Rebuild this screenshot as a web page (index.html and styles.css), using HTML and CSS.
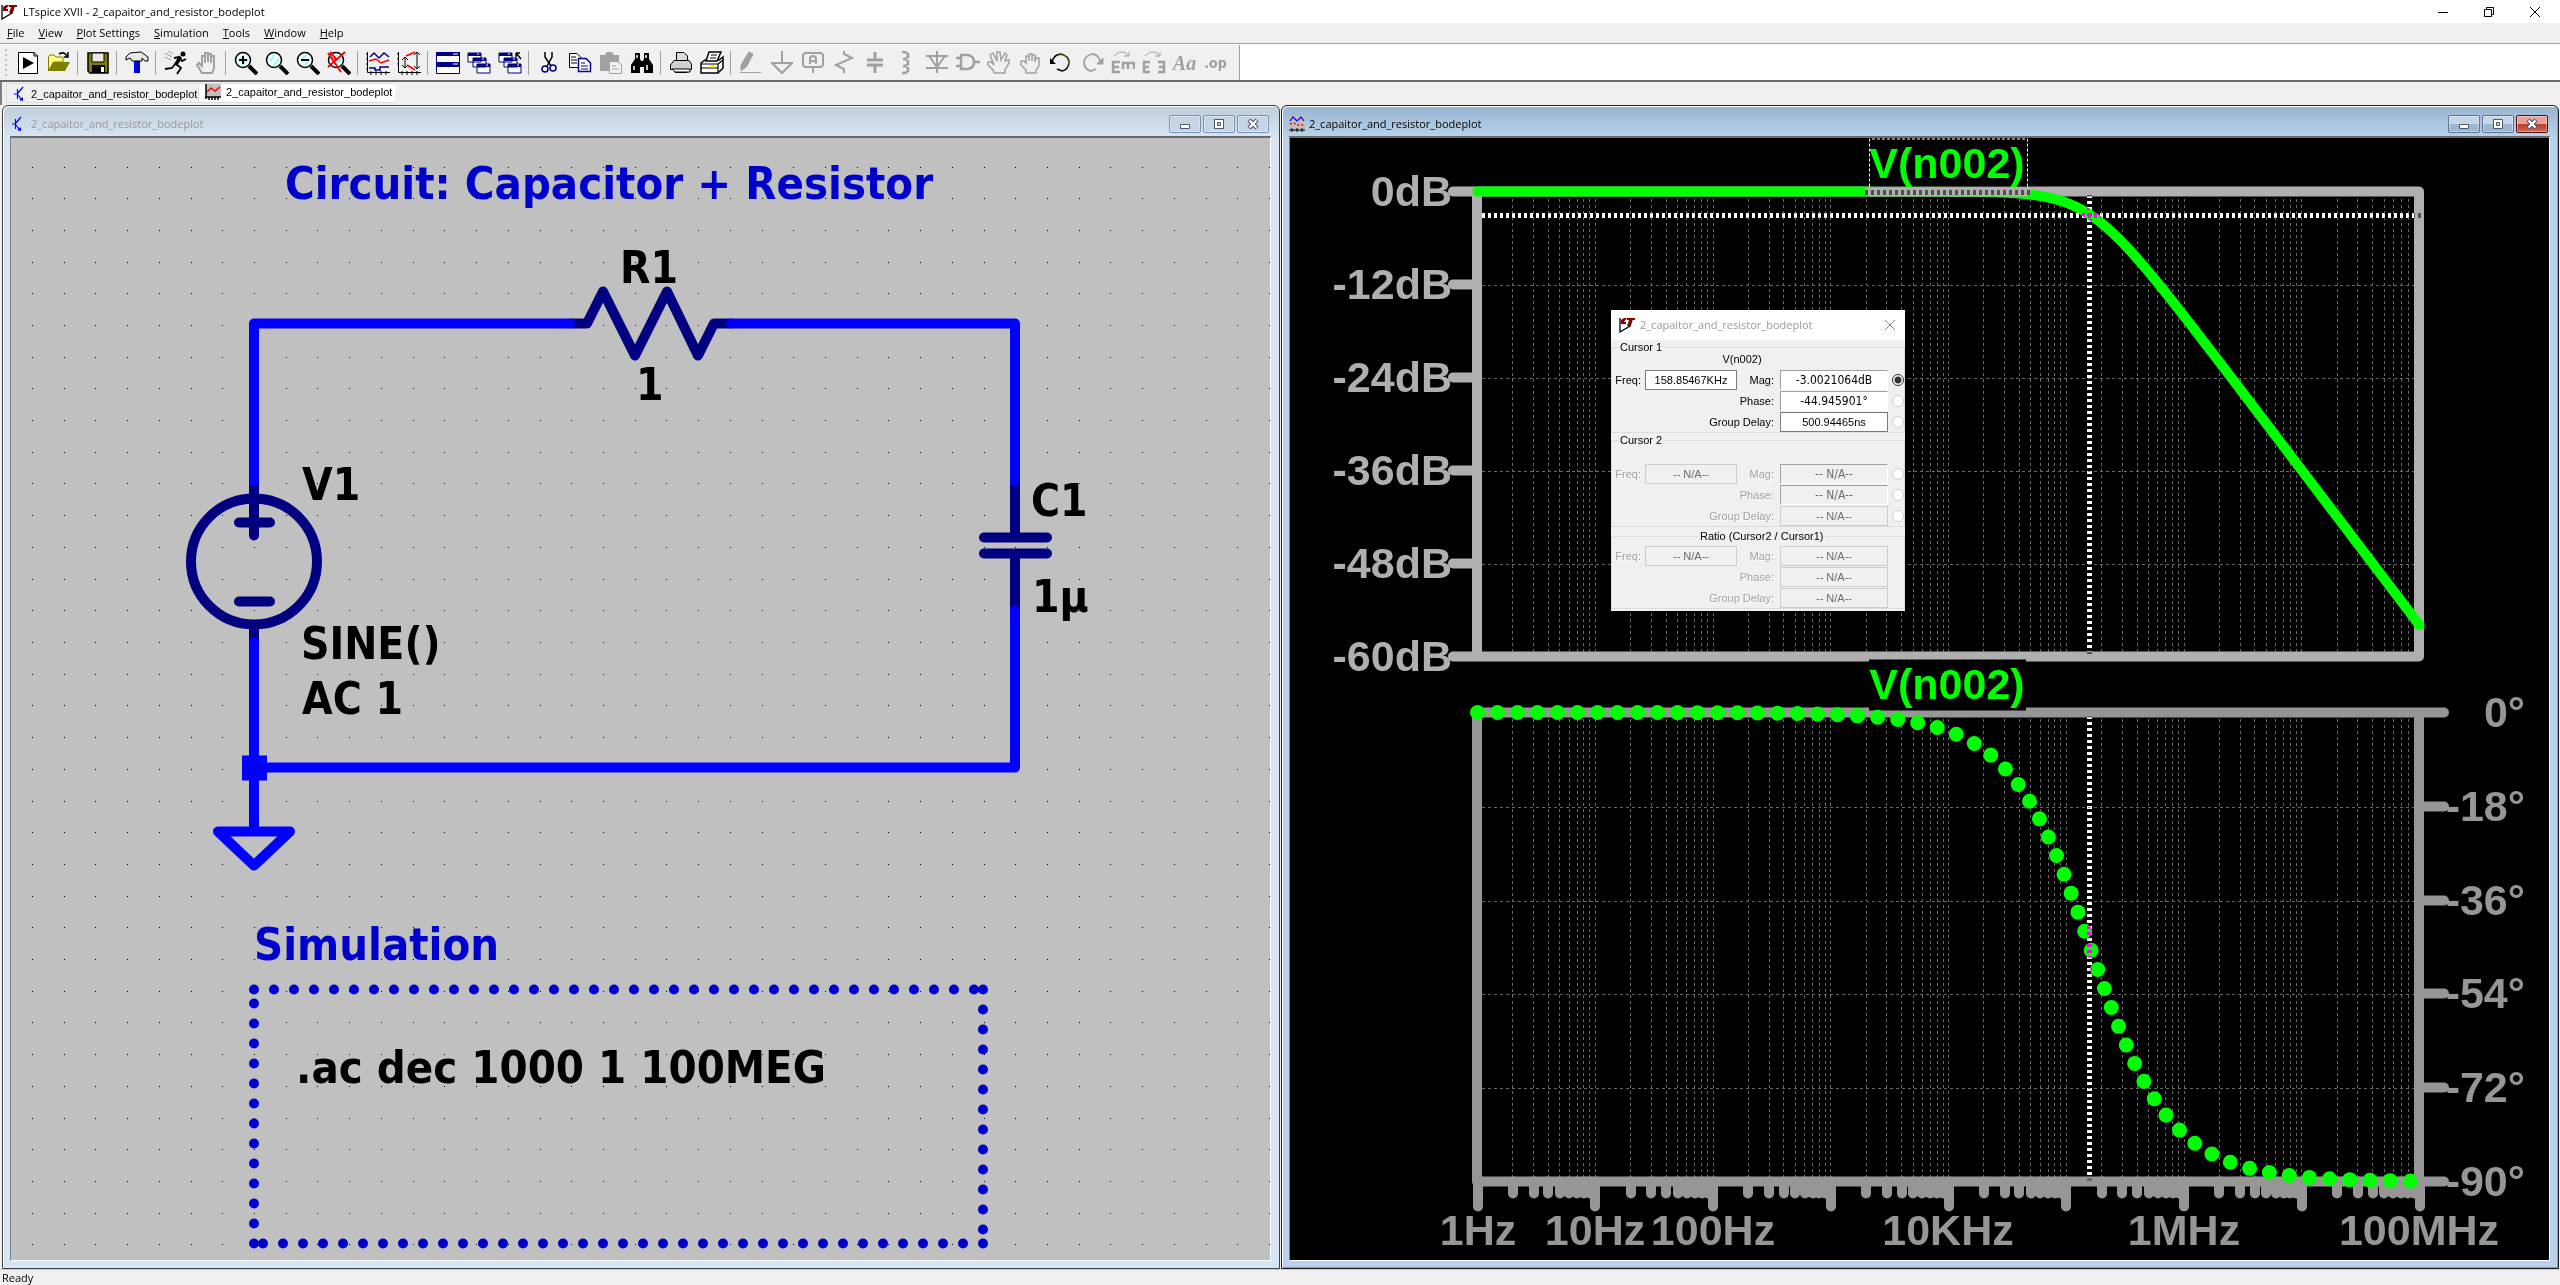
FILE: index.html
```
<!DOCTYPE html>
<html lang="en">
<head>
<meta charset="utf-8">
<title>LTspice XVII - 2_capaitor_and_resistor_bodeplot</title>
<link rel="stylesheet" href="styles.css">
</head>
<body>
<svg class="defs" aria-hidden="true">
  <symbol id="logo" viewBox="0 0 16 16"><path d="M1 1L1 15L11 9L13 3" fill="#fff" stroke="#000" stroke-width="1.3"/><path d="M5 1L2 3V7H7V5H5L8 1ZM8 1H16V3H13L11 9H8L10 3H8Z" fill="#8b0000"/></symbol>
  <symbol id="npn" viewBox="0 0 16 16"><path d="M2 8H5M5.500 3V13M6 7L11 1M6 9L10 14" fill="none" stroke="#00f" stroke-width="1.200"/><path d="M11 15V11L7 14Z" fill="#00f"/></symbol>
  <symbol id="wave" viewBox="0 0 16 16"><path d="M1 0H16V13H1Z" fill="#c0c0c0"/><path d="M1 0V15M0 13H16M4 13V16M7 13V16M10 13V16M13 13V16" fill="none" stroke="#000" stroke-width="1.500"/><path d="M2 8L6 4L10 7L15 3" fill="none" stroke="red" stroke-width="1.500"/></symbol>
  <symbol id="waves" viewBox="0 0 16 16"><path d="M0 0H16V16H0Z" fill="#c0c0c0"/><path d="M1 5L4 1L8 5L12 1L15 5" fill="none" stroke="#00f" stroke-width="1.2"/><path d="M1 8L5 7L8 9L15 9" fill="none" stroke="red" stroke-width="1.5" stroke-dasharray="2 2"/><path d="M0 14H16M3 12V16M8 12V16M13 12V16" stroke="#000"/></symbol>
  <symbol id="m-min" viewBox="0 0 12 12"><path d="M1.5 6.500H10.500V10.500H1.500Z" fill="#fff" stroke="#50586c"/></symbol>
  <symbol id="m-max" viewBox="0 0 12 12"><path d="M1.500 1.500H10.500V10.500H1.500Z" fill="#fff" stroke="#50586c"/><path d="M4.500 4.500H7.500V7.500H4.500Z" fill="#b8c8dc" stroke="#50586c"/></symbol>
  <symbol id="m-x" viewBox="0 0 12 12"><path d="M2 2L10 10M10 2L2 10" stroke="#50586c" stroke-width="4.500"/><path d="M2.500 2.500L9.500 9.500M9.500 2.500L2.500 9.500" stroke="#fff" stroke-width="2.200"/></symbol>
  <symbol id="lens" viewBox="0 0 24 24"><path d="M15 15L23 23" stroke="#000" stroke-width="4"/><circle cx="9" cy="9" r="7.500" fill="#f4ffff" stroke="#000" stroke-width="1.500"/><path d="M5 10L10 4M9 14L14 8" stroke="#6ff" stroke-width="1.200"/></symbol>
  <symbol id="casc" viewBox="0 0 24 24"><path d="M1 2H14V11H1ZM6 7H19V16H6ZM10 13H23V22H10Z" fill="#fff" stroke="navy"/><path d="M1 2H14V5H1ZM6 7H19V10H6ZM10 13H23V16H10Z" fill="navy"/><path d="M10 3H12M15 8H17M19 14H21" stroke="#fff"/></symbol>
</svg>

<header class="titlebar">
  <svg class="ico16"><use href="#logo"/></svg>
  <h1 class="caption">LTspice XVII - 2_capaitor_and_resistor_bodeplot</h1>
  <button class="sys" aria-label="Minimize"><svg viewBox="0 0 12 12"><path d="M1 6.500H11" stroke="#000"/></svg></button>
  <button class="sys" aria-label="Restore"><svg viewBox="0 0 12 12"><path d="M1.500 3.500H8.500V10.500H1.500ZM3.500 3V1.500H10.500V8.500H9" fill="none" stroke="#000"/></svg></button>
  <button class="sys" aria-label="Close"><svg viewBox="0 0 12 12"><path d="M1 1L11 11M11 1L1 11" stroke="#000"/></svg></button>
</header>

<nav class="menubar">
  <button><u>F</u>ile</button><button><u>V</u>iew</button><button><u>P</u>lot Settings</button><button><u>S</u>imulation</button><button><u>T</u>ools</button><button><u>W</u>indow</button><button><u>H</u>elp</button>
</nav>

<div class="toolrow">
<div class="toolbar" role="toolbar">
  <span class="grip"></span>
  <button aria-label="New"><svg viewBox="0 0 24 24"><path d="M2.500 1.500H18L21.500 5V22.500H2.500Z" fill="#fff" stroke="#000"/><path d="M18 1V5H22" fill="none" stroke="#000"/><path d="M7 6V18L18 12Z"/></svg></button>
  <button aria-label="Open"><svg viewBox="0 0 24 24"><path d="M1.500 20V6L3 4H7L9 6H16V11H7Z" fill="#ffff80" stroke="#808000"/><path d="M1 20L6 11H23L18 20Z" fill="#808000"/><path d="M12 3Q17 0 20 5M17 6H21V1" fill="none" stroke="#000" stroke-width="1.500"/></svg></button>
  <span class="sep"></span>
  <button aria-label="Save"><svg viewBox="0 0 24 24"><path d="M2 2H22V22H4L2 20Z" fill="#808000" stroke="#000" stroke-width="1.500"/><path d="M6 2H18V11H6Z" fill="#e8e8e8" stroke="#000"/><path d="M6 14H19V22H6Z"/><path d="M15 16H18V21H15Z" fill="#fff"/></svg></button>
  <span class="sep"></span>
  <button aria-label="Control panel"><svg viewBox="0 0 24 24"><path d="M9 10H15V22H9Z" fill="#00f"/><path d="M12 10H15V22H12Z" fill="#0000a0"/><path d="M1 6L5 2L16 1L23 6V10H20L17 7V10H7L5 7L1 9Z" fill="#e8e8e8" stroke="#000"/></svg></button>
  <span class="sep"></span>
  <button aria-label="Run"><svg viewBox="0 0 24 24"><circle cx="19" cy="3" r="2.500"/><path d="M16 5L12 13L17 17L13 23M12 12L8 17L1 18M10 7L15 6L18 10L22 8" fill="none" stroke="#000" stroke-width="1.800"/><path d="M15 5L10 13L13 15L18 7Z"/><path d="M1 2L8 6M1 6L7 9M4 0L9 3" stroke="#999"/></svg></button>
  <button aria-label="Halt"><svg viewBox="0 0 24 24" class="dim"><path d="M7 22L2 14L4 12L7 15V5H10V12V2H13V11V3H16V12V5H19V17L17 22Z" stroke-width="2"/></svg></button>
  <span class="sep"></span>
  <button aria-label="Zoom in"><svg viewBox="0 0 24 24"><use href="#lens"/><path d="M5 9H13M9 5V13" stroke="#000" stroke-width="2"/></svg></button>
  <button aria-label="Pan"><svg viewBox="0 0 24 24"><use href="#lens"/></svg></button>
  <button aria-label="Zoom out"><svg viewBox="0 0 24 24"><use href="#lens"/><path d="M5 9H13" stroke="#000" stroke-width="2"/></svg></button>
  <button aria-label="Zoom full"><svg viewBox="0 0 24 24"><use href="#lens"/><path d="M1 2L14 21M18 1L1 16M3 1L9 8" stroke="red" stroke-width="2"/></svg></button>
  <span class="sep"></span>
  <button aria-label="Autorange"><svg viewBox="0 0 24 24"><path d="M1.500 1V21.500H24M0 3H2M0 8H2M0 13H2M0 18H2M5 20V24M10 20V24M15 20V24M20 20V24" fill="none" stroke="#000"/><path d="M4 6L8 2L13 7L18 2L23 6M3 17H9V19H14V16H23" fill="none" stroke="navy" stroke-width="1.500"/><path d="M3 10L10 8L15 12L23 9" fill="none" stroke="red" stroke-width="1.500"/></svg></button>
  <button aria-label="Pick visible traces"><svg viewBox="0 0 24 24"><path d="M1.500 1V21.500H24M0 3H2M0 8H2M0 13H2M5 20V24M10 20V24M15 20V24M20 20V24M8 6V17M5 9L8 6L11 9M5 14L8 17L11 14M20 1V18M17 4L20 1L23 4M17 15L20 18L23 15" fill="none" stroke="#000"/><path d="M18 1L9 5M10 14L18 19" stroke="red" stroke-width="1.500"/></svg></button>
  <span class="sep"></span>
  <button aria-label="Tile windows"><svg viewBox="0 0 24 24"><path d="M.5 1.500H23.500V22.500H.5Z" fill="#fff" stroke="navy"/><path d="M0 1H24V5H0ZM0 11H24V16H0Z" fill="navy"/><path d="M17 3H22M17 13H22" stroke="#fff"/></svg></button>
  <button aria-label="Cascade windows"><svg viewBox="0 0 24 24"><use href="#casc"/></svg></button>
  <button aria-label="Close all windows"><svg viewBox="0 0 24 24"><use href="#casc"/><path d="M18 2H22M18 2V6M18 2L23 8" stroke="#000" stroke-width="1.500"/></svg></button>
  <span class="sep"></span>
  <button aria-label="Cut"><svg viewBox="0 0 24 24"><path d="M8 1V6L14 15M15 1V6L10 15" fill="none" stroke="#000" stroke-width="1.500"/><circle cx="8" cy="18" r="3" fill="none" stroke="navy" stroke-width="1.500"/><circle cx="16" cy="17" r="3" fill="none" stroke="navy" stroke-width="1.500"/></svg></button>
  <button aria-label="Copy"><svg viewBox="0 0 24 24"><path d="M1.500 2.500H9L13.500 7V16.500H1.500Z" fill="#fff" stroke="#000"/><path d="M3 6H8M3 9H9M3 12H9" stroke="#000"/><path d="M10.500 7.500H18L22.500 12V20.500H10.500Z" fill="#fff" stroke="navy" stroke-width="1.500"/><path d="M13 12H17M13 15H20M13 18H20" stroke="navy"/></svg></button>
  <button aria-label="Paste"><svg viewBox="0 0 24 24"><path d="M1 4H6L8 1H13L15 4H20V20H1Z" fill="#a0a0a0"/><path d="M10.500 10.500H19L22.500 14V22.500H10.500Z" fill="#f0f0f0" stroke="#a0a0a0"/><path d="M13 15H17M13 18H20" stroke="#a0a0a0"/></svg></button>
  <button aria-label="Find"><svg viewBox="0 0 24 24"><path d="M5 2H10V8L11 10H13L14 8V2H19V8L23 14V22H14V16H10V22H1V14L5 8Z"/><path d="M4 15V19M7 4V7M16 4V7M17 14V19" stroke="#fff" stroke-width="1.500"/></svg></button>
  <span class="sep"></span>
  <button aria-label="Print"><svg viewBox="0 0 24 24"><path d="M7.500 9V1.500H15L18.500 5V10" fill="#ddd" stroke="#000"/><path d="M1.500 18.500V14L5 9.500H20L22.500 13V18.500H18V21.500H6V18.500Z" fill="#d0d0d0" stroke="#000"/><path d="M3 18H21V21H6Z" fill="#fff" stroke="#000"/></svg></button>
  <button aria-label="Print setup"><svg viewBox="0 0 24 24"><path d="M1 12L5 9H19L23 6V17L18 22H1Z" fill="#fff" stroke="#000" stroke-width="1.500"/><path d="M6 10L9 1H21L17 10Z" fill="#fff" stroke="#000" stroke-width="1.500"/><path d="M11 4H17M10 7H16M1 13H18V22M1 17H18M18 13L23 9" fill="none" stroke="#000" stroke-width="1.200"/><path d="M10 15.500H15" stroke="#ee0" stroke-width="2"/></svg></button>
  <span class="sep"></span>
  <button aria-label="Wire"><svg viewBox="0 0 24 24" class="dim"><path d="M1 21.500H22"/><path d="M10 1L14 3L8 15L2 20V14Z" class="solid"/></svg></button>
  <button aria-label="Ground"><svg viewBox="0 0 24 24" class="dim"><path d="M12 0V12M1 12H23M2 12L12 22L22 12" stroke-width="2"/></svg></button>
  <button aria-label="Net label"><svg viewBox="0 0 24 24" class="dim"><path d="M4 2H20L22 4V14L20 16H4L2 14V4ZM12 16V22M9 13V7L11 5H13L15 7V13M9 10H15" stroke-width="2"/></svg></button>
  <button aria-label="Resistor"><svg viewBox="0 0 24 24" class="dim"><path d="M12 0V3L20 7L4 14L12 18V22" stroke-width="2"/></svg></button>
  <button aria-label="Capacitor"><svg viewBox="0 0 24 24" class="dim"><path d="M12 1V9M4 9H20M4 14H20M12 14V22" stroke-width="3"/></svg></button>
  <button aria-label="Inductor"><svg viewBox="0 0 24 24" class="dim"><path d="M8 1H11L14 3V6L11 8H9H11L14 10V13L11 15H9H11L14 17V20L11 22H8" stroke-width="2.500"/></svg></button>
  <button aria-label="Diode"><svg viewBox="0 0 24 24" class="dim"><path d="M12 0V22M1 5H23M4 5L12 16L20 5M1 17H23" stroke-width="2"/></svg></button>
  <button aria-label="Component"><svg viewBox="0 0 24 24" class="dim"><path d="M0 7H5M0 15H5M5 4H12Q18 5 18 11Q18 17 12 18H5ZM18 11H24" stroke-width="2.500"/></svg></button>
  <button aria-label="Move"><svg viewBox="0 0 24 24" class="dim"><path d="M7 22L6 19L1 14V11L4 11L7 14L3 4L6 2L10 10V1H13L14 9L18 2L20 4L18 10L22 9V12L18 19V22Z" stroke-width="1.500"/></svg></button>
  <button aria-label="Drag"><svg viewBox="0 0 24 24" class="dim"><path d="M8 22V19L3 14V10L6 10L8 12V5H11V10V3H14V10V4H17V11L18 7H21V15L18 19V22Z" stroke-width="1.500"/></svg></button>
  <button aria-label="Undo"><svg viewBox="0 0 24 24"><path d="M3 10Q6 3 12 3Q20 5 20 12Q19 19 13 20L8 18" fill="none" stroke="#000" stroke-width="1.500"/><path d="M9 4Q19 2 20 13" fill="none" stroke="#808000"/><path d="M1 7V13H7Z"/></svg></button>
  <button aria-label="Redo"><svg viewBox="0 0 24 24" class="dim"><path d="M20 10Q18 3 12 3Q4 5 4 12Q5 19 11 20L16 18" stroke-width="1.800"/><path d="M23 7V13H17Z" class="solid"/></svg></button>
  <button aria-label="Rotate"><svg viewBox="0 0 24 24" class="dim"><path d="M3 5Q8 -1 15 2L17 5M13 5H18V1"/><path d="M9 11H2V21H9M2 16H8M12 18V12H23V18M17 12V18" stroke-width="2.500"/></svg></button>
  <button aria-label="Mirror"><svg viewBox="0 0 24 24" class="dim"><path d="M3 5Q8 -1 15 2L17 5M13 5H18V1"/><path d="M8 11H2V21H8M2 16H7M16 11H22V21H16M22 16H17" stroke-width="2.500"/></svg></button>
  <button aria-label="Text" class="glyph script">Aa</button>
  <button aria-label="SPICE directive" class="glyph">.op</button>
</div>
</div>

<div class="tabs">
  <button class="tab"><svg class="ico16"><use href="#npn"/></svg>2_capaitor_and_resistor_bodeplot</button>
  <button class="tab current"><svg class="ico16"><use href="#wave"/></svg>2_capaitor_and_resistor_bodeplot</button>
</div>

<main class="workspace">
  <section class="win">
    <header class="wincap">
      <svg class="ico16"><use href="#npn"/></svg><h2 class="caption">2_capaitor_and_resistor_bodeplot</h2>
      <button aria-label="Minimize"><svg><use href="#m-min"/></svg></button><button aria-label="Maximize"><svg><use href="#m-max"/></svg></button><button aria-label="Close"><svg><use href="#m-x"/></svg></button>
    </header>
    <div class="client sheet">
      <svg class="canvas" viewBox="11 138 1259 1121">
        <path id="dots" fill="#000" shape-rendering="crispEdges"/>
        <g class="part">
          <path d="M571 323H587L603 291L635 355L667 291L698 355L714 323H731"/>
          <path d="M1015 481V537M984 537H1047M984 553H1047M1015 553V610"/>
          <circle cx="254" cy="561" r="63"/>
          <path d="M254 481V535M239 522H270M239 601H270M254 627V642"/>
        </g>
        <path class="wire" d="M254 481V323H570M731 323H1015V481M1015 610V767H254M254 642V831M218 831H290L254 865Z"/>
        <rect x="242" y="755" width="25" height="25" fill="#00f"/>
        <path class="box" d="M254 989H983M983 989V1243M983 1243H254M254 1243V989"/>
        <g class="net">
          <text x="620" y="282">R1</text><text x="636" y="399">1</text>
          <text x="302" y="499">V1</text><text x="301" y="658">SINE()</text><text x="302" y="713">AC 1</text>
          <text x="1031" y="515">C1</text><text x="1032" y="611">1µ</text>
          <text class="wide" x="296" y="1082">.ac dec 1000 1 100MEG</text>
          <text class="note" x="285" y="198">Circuit: Capacitor + Resistor</text>
          <text class="note" x="254" y="959">Simulation</text>
        </g>
      </svg>
    </div>
  </section>

  <section class="win active">
    <header class="wincap">
      <svg class="ico16"><use href="#waves"/></svg><h2 class="caption">2_capaitor_and_resistor_bodeplot</h2>
      <button aria-label="Minimize"><svg><use href="#m-min"/></svg></button><button aria-label="Maximize"><svg><use href="#m-max"/></svg></button><button class="close" aria-label="Close"><svg><use href="#m-x"/></svg></button>
    </header>
    <div class="client plot">
      <svg class="canvas" viewBox="1290 138 1259 1121">
        <path id="grid" class="grid"/>
        <g class="ylab mag"><text x="1452" y="205">0dB</text><text x="1452" y="298">-12dB</text><text x="1452" y="391">-24dB</text><text x="1452" y="484">-36dB</text><text x="1452" y="577">-48dB</text><text x="1452" y="670">-60dB</text></g>
        <g class="ylab phase"><text x="2525" y="726">0°</text><text x="2525" y="820">-18°</text><text x="2525" y="914">-36°</text><text x="2525" y="1007">-54°</text><text x="2525" y="1101">-72°</text><text x="2525" y="1195">-90°</text></g>
        <g class="xlab phase"><text x="1478" y="1244">1Hz</text><text x="1595" y="1244">10Hz</text><text x="1713" y="1244">100Hz</text><text x="1948" y="1244">10KHz</text><text x="2184" y="1244">1MHz</text><text x="2419" y="1244">100MHz</text></g>
        <path class="axis mag" d="M1477 191H2419V656H1477ZM1453 191H1477M1453 284H1477M1453 377H1477M1453 470H1477M1453 563H1477M1453 656H1477"/>
        <path class="axis phase" d="M1477 712H2419V1181H1477ZM2419 712H2444M2419 806H2444M2419 900H2444M2419 993H2444M2419 1087H2444M2419 1181H2444"/>
        <path id="ticks" class="axis phase"/>
        <path id="magnitude" class="trace"/>
        <path class="axis mag" d="M1870 191H2026"/>
        <path d="M1869 659H2026V710H1869ZM1870 139H2027V186H1870Z" fill="#000"/>
        <path id="phase-low" class="trace dotted" stroke-dasharray="0 20"/>
        <path id="phase-high" class="trace dotted" stroke-dasharray="0 20.2"/>
        <g class="xlab name"><text x="1947" y="177">V(n002)</text><text x="1947" y="698">V(n002)</text></g>
        <path class="focus" d="M1869.500 186V138.500H2027.500V186"/>
        <path class="cursor" d="M1865 191.500H2031M1482 214.500H2422M2089.500 194V655M2089.500 715V1181"/>
      </svg>

      <form class="dialog">
        <header class="dlgcap"><svg class="ico16"><use href="#logo"/></svg><h3 class="caption">2_capaitor_and_resistor_bodeplot</h3><button type="button" class="x" aria-label="Close"><svg viewBox="0 0 12 12"><path d="M1 1L11 11M11 1L1 11" stroke="#888"/></svg></button></header>
        <fieldset>
          <legend>Cursor 1</legend>
          <p class="trname">V(n002)</p>
          <div class="fields">
            <label for="f1">Freq:</label><input id="f1" value="158.85467KHz"><label for="m1">Mag:</label><input class="big" id="m1" value="-3.0021064dB"><input type="radio" name="c" checked aria-label="Show magnitude">
            <label class="wide" for="p1">Phase:</label><input class="big" id="p1" value="-44.945901°"><input type="radio" name="c" aria-label="Show phase">
            <label class="wide" for="g1">Group Delay:</label><input id="g1" value="500.94465ns"><input type="radio" name="c" aria-label="Show delay">
          </div>
        </fieldset>
        <fieldset class="second" disabled>
          <legend>Cursor 2</legend>
          <div class="fields">
            <label for="f2">Freq:</label><input id="f2" value="-- N/A--"><label for="m2">Mag:</label><input class="big" id="m2" value="-- N/A--"><input type="radio" name="d" aria-label="Show magnitude 2">
            <label class="wide" for="p2">Phase:</label><input class="big" id="p2" value="-- N/A--"><input type="radio" name="d" aria-label="Show phase 2">
            <label class="wide" for="g2">Group Delay:</label><input id="g2" value="-- N/A--"><input type="radio" name="d" aria-label="Show delay 2">
          </div>
        </fieldset>
        <fieldset class="ratio" disabled>
          <legend>Ratio (Cursor2 / Cursor1)</legend>
          <div class="fields">
            <label for="f3">Freq:</label><input id="f3" value="-- N/A--"><label for="m3">Mag:</label><input id="m3" value="-- N/A--">
            <label class="wide" for="p3">Phase:</label><input id="p3" value="-- N/A--">
            <label class="wide" for="g3">Group Delay:</label><input id="g3" value="-- N/A--">
          </div>
        </fieldset>
      </form>
    </div>
  </section>
</main>

<footer class="status">Ready</footer>
<script src="plot.js"></script>
</body>
</html>
```
FILE: styles.css
```
* { box-sizing: border-box; }

body {
  margin: 0;
  height: 100vh;
  display: flex;
  flex-direction: column;
  overflow: hidden;
  background: #f0f0f0;
  color: #000;
  font: 11px/16px "Open Sans", "Noto Sans", sans-serif;
}

button {
  margin: 0;
  padding: 0;
  border: 0;
  background: none;
  color: inherit;
  font: inherit;
}

svg { display: block; }
.defs { position: absolute; width: 0; height: 0; }
.ico16 { width: 16px; height: 16px; flex: none; }

.caption {
  flex: 1;
  margin: 0;
  font-size: 11px;
  font-weight: 400;
  white-space: nowrap;
}

/* Application chrome */
.titlebar {
  display: flex;
  align-items: center;
  gap: 6px;
  height: 23px;
  padding: 0 5px 0 1px;
  background: #fff;
}
.sys {
  width: 40px;
  height: 23px;
  display: grid;
  place-items: center;
}
.sys svg { width: 12px; height: 12px; }

.menubar {
  display: flex;
  align-items: center;
  gap: 14px;
  height: 21px;
  padding-left: 7px;
  border-bottom: 1px solid #a0a0a0;
}

.toolrow {
  display: flex;
  height: 38px;
  background: #fff;
  border-top: 1px solid #fff;
  border-bottom: 2px solid #696969;
}
.toolbar {
  display: flex;
  align-items: center;
  padding-right: 8px;
  background: #f0f0f0;
  border-right: 1px solid #a0a0a0;
}
.toolbar button {
  width: 31px;
  height: 24px;
  display: grid;
  place-items: center;
}
.toolbar svg { width: 24px; height: 24px; }
.grip {
  width: 8px;
  height: 28px;
  margin-right: 4px;
  background: repeating-linear-gradient(#c0c0c0 0 2px, transparent 2px 5px) 5px 0 / 2px 100% no-repeat;
}
.sep {
  width: 8px;
  height: 24px;
  background: linear-gradient(#a0a0a0, #a0a0a0) 3px 0 / 1px 100% no-repeat;
}
.dim { fill: none; stroke: #a0a0a0; }
.dim .solid { fill: #a0a0a0; }
.glyph { color: #a0a0a0; }
.toolbar .glyph { font: bold 14px/22px "DejaVu Sans Condensed", sans-serif; }
.toolbar .script { font: italic bold 20px/22px "Liberation Serif", serif; }

.tabs {
  display: flex;
  height: 23px;
  padding: 1px 0 2px 4px;
  border-left: 2px solid #808080;
  margin-right: 2px;
  font: 11px/16px "Liberation Sans", sans-serif;
}
.tab {
  display: flex;
  align-items: center;
  gap: 3px;
  width: 192px;
  padding: 2px 0 0 5px;
  border: 1px solid #ddd;
  border-right: 0;
  white-space: nowrap;
}
.tab.current {
  gap: 5px;
  width: 197px;
  padding: 0 0 2px 6px;
  background: #fff;
}

/* MDI child windows */
.workspace {
  flex: 1;
  min-height: 0;
  display: grid;
  grid-template-columns: 1fr 1fr;
  gap: 1px;
  padding: 0 1px 0 2px;
}
.win {
  --frame: #d7e4f2;
  --top: #bfcddb;
  --btn: #c6d5e6;
  display: flex;
  flex-direction: column;
  min-width: 0;
  min-height: 0;
  padding: 0 8px 7px 7px;
  border: 1px solid #404040;
  border-radius: 6px 6px 0 0;
  background: linear-gradient(var(--top), var(--frame) 30px);
  box-shadow: inset 1px 1px #fff;
}
.win.active {
  --frame: #b9d1ea;
  --top: #99b4d1;
  --btn: #b9d0e8;
  border-color: #202020;
  box-shadow: inset 1px 1px #fff, inset -1px -1px #30c0d8;
}
.wincap {
  display: flex;
  align-items: center;
  gap: 2px;
  height: 30px;
  padding: 6px 2px 0 0;
}
.win .wincap .caption { color: #999; padding-left: 3px; }
.win.active .wincap .caption { color: #000; padding-left: 2px; }
.wincap button {
  width: 32px;
  height: 18px;
  display: grid;
  place-items: center;
  border: 1px solid #8090b0;
  border-radius: 2px;
  background: var(--btn);
  box-shadow: inset 0 0 0 1px #ffffff60;
}
.wincap button svg { width: 12px; height: 12px; }
.active .wincap button { border-color: #5f7390; background: linear-gradient(#c3d6ea 50%, #9cb7d3 50%); }
.active .wincap .close { border-color: #4a1018; background: linear-gradient(#e6a298 50%, #bd3c28 50%, #cf6a50); }

.client {
  position: relative;
  flex: 1;
  min-height: 0;
  border: 1px solid #fff;
  border-top: 2px solid #696969;
  border-left-color: #808080;
}
.sheet { background: #c0c0c0; }
.plot { background: #000; }
.canvas { width: 100%; height: 100%; }

/* Schematic */
.part, .wire, .box {
  fill: none;
  stroke-width: 10px;
  stroke-linecap: round;
  stroke-linejoin: round;
}
.part { stroke: #000080; }
.wire { stroke: #0000ff; }
.box { stroke: #0000cd; stroke-dasharray: 0 20; }
.net { font: bold 44px "DejaVu Sans Condensed", "Noto Sans", sans-serif; }
.net .wide { font-size: 45px; }
.net .note { fill: #0000cd; font-size: 45px; }

/* Bode plot */
.grid { fill: none; stroke: #686868; stroke-dasharray: 3 3; shape-rendering: crispEdges; }
.axis { fill: none; stroke-width: 10px; stroke-linecap: round; stroke-linejoin: round; }
.axis.mag { stroke: #afafaf; }
.axis.phase { stroke: #969696; }
.trace { fill: none; stroke: #00ff00; stroke-width: 10px; stroke-linecap: round; stroke-linejoin: round; }
.trace.dotted { stroke-width: 15px; }
.cursor { fill: none; stroke: #fff; stroke-width: 5px; stroke-dasharray: 3 3; mix-blend-mode: difference; shape-rendering: crispEdges; }
.focus { fill: none; stroke: #fff; stroke-dasharray: 3 2; }
.ylab, .xlab { font: bold 43px "Liberation Sans", sans-serif; }
.ylab { text-anchor: end; }
.xlab { text-anchor: middle; }
text { white-space: pre; }
.ylab.mag { fill: #afafaf; }
.ylab.phase, .xlab.phase { fill: #969696; }
.name { fill: #00ff00; }

/* Cursor readout dialog */
.dialog {
  position: absolute;
  left: 321px;
  top: 172px;
  width: 294px;
  padding-bottom: 2px;
  background: #f0f0f0;
  font: 11px/12px "Liberation Sans", sans-serif;
}
.dlgcap {
  display: flex;
  align-items: center;
  gap: 5px;
  height: 30px;
  padding: 0 9px 0 8px;
  margin-bottom: 1px;
  background: #fff;
}
.dlgcap .caption { color: #999; font: 11px/16px "Open Sans", sans-serif; }
.x svg { width: 12px; height: 12px; }
fieldset {
  min-width: 0;
  margin: 0 0 1px;
  padding: 0;
  border: 1px solid #dcdcdc;
}
fieldset.second { margin-bottom: 3px; }
legend { margin-left: 6px; padding: 0 2px; height: 12px; }
.ratio legend { margin-left: 86px; }
.ratio { margin-bottom: 0; }
.trname { margin: 0; padding-right: 32px; line-height: 13px; text-align: center; }
.fields {
  display: grid;
  grid-template-columns: 29px 92px 35px 108px 12px;
  grid-auto-rows: 20px;
  gap: 1px 4px;
  align-items: center;
  padding-top: 4px;
}
.second .fields { padding-top: 18px; }
.fields label { text-align: right; white-space: nowrap; }
.fields label + input + label, .wide { padding-right: 2px; }
.fields .wide { grid-column: 1 / 4; }
.fields input:not([type]) {
  width: 100%;
  height: 20px;
  padding: 0;
  border: 1px solid #7a7a7a;
  background: #fff;
  color: #000;
  font: inherit;
  text-align: center;
}
.fields input.big { border-color: #a0a0a0 #fff #fff #a0a0a0; font: 12px/14px "DejaVu Sans Condensed", sans-serif; }
fieldset:disabled label { color: #a0a0a0; text-shadow: 1px 1px #fff; }
.fields input:not([type]):disabled { border-color: #ccc; background: #f0f0f0; color: #6d6d6d; }
.fields input.big:disabled { border-color: #a0a0a0 #fff #fff #a0a0a0; }
.ratio label:first-child, .ratio .wide { grid-column-start: 1; }
input[type="radio"] {
  appearance: none;
  width: 12px;
  height: 12px;
  margin: 0;
  border: 1px solid #ccc;
  border-radius: 50%;
  background: #fff;
}
input[type="radio"]:checked { border-color: #333; background: radial-gradient(#333 0 3px, #fff 4px); }

.status {
  height: 16px;
  padding-left: 2px;
  border-top: 1px solid #d0c8c8;
  font: 11px/15px "Open Sans", sans-serif;
}
```
FILE: plot.js
```
// Axis geometry in drawing units
const X0 = 1477.5, DECADE = 117.75;
const MAG0 = 191, PER_DB = 7.75;
const PH0 = 712, PER_DEG = 469 / 90;
const FC = 159155;
const set = (id, d) => document.getElementById(id).setAttribute('d', d);

// Log frequency grid and tick marks
let grid = '', ticks = '';
for (let n = 0; n <= 8; n++) {
  for (let m = 1; m < 10; m++) {
    if (n === 8 && m > 1) break;
    const x = X0 + DECADE * (n + Math.log10(m));
    const g = Math.floor(x) + 0.5;
    if (n + m > 1 && n < 8) grid += `M${g} 198V651M${g} 718V1176`;
    ticks += `M${Math.round(x)} 1181V${m === 1 ? 1206 : 1193}`;
  }
}
for (let k = 1; k < 5; k++) {
  grid += `M1482 ${MAG0 + 93 * k + 0.5}H2414M1482 ${Math.round(PH0 + 93.8 * k) + 0.5}H2414`;
}
set('grid', grid);
set('ticks', ticks);

// First-order low-pass response
const SPLIT = 380;
const mag = [], phase = [];
for (let x = 0; x <= 8 * DECADE; x += 1) {
  const r = Math.pow(10, x / DECADE) / FC;
  mag.push(`${X0 + x} ${(MAG0 + 10 * Math.log10(1 + r * r) * PER_DB).toFixed(2)}`);
  phase.push(`${X0 + x} ${(PH0 + Math.atan(r) * 180 / Math.PI * PER_DEG).toFixed(2)}`);
}
set('magnitude', 'M' + mag.join('L'));
set('phase-low', 'M' + phase.slice(0, SPLIT + 1).join('L'));
set('phase-high', 'M' + phase.slice(SPLIT).join('L'));

// Schematic snap grid
let dots = '';
for (let y = 165.5; y < 1259; y += 31.7) {
  for (let x = 32; x < 1270; x += 31.72) {
    dots += `M${Math.round(x)} ${Math.round(y)}h1v1h-1z`;
  }
}
set('dots', dots);
```
